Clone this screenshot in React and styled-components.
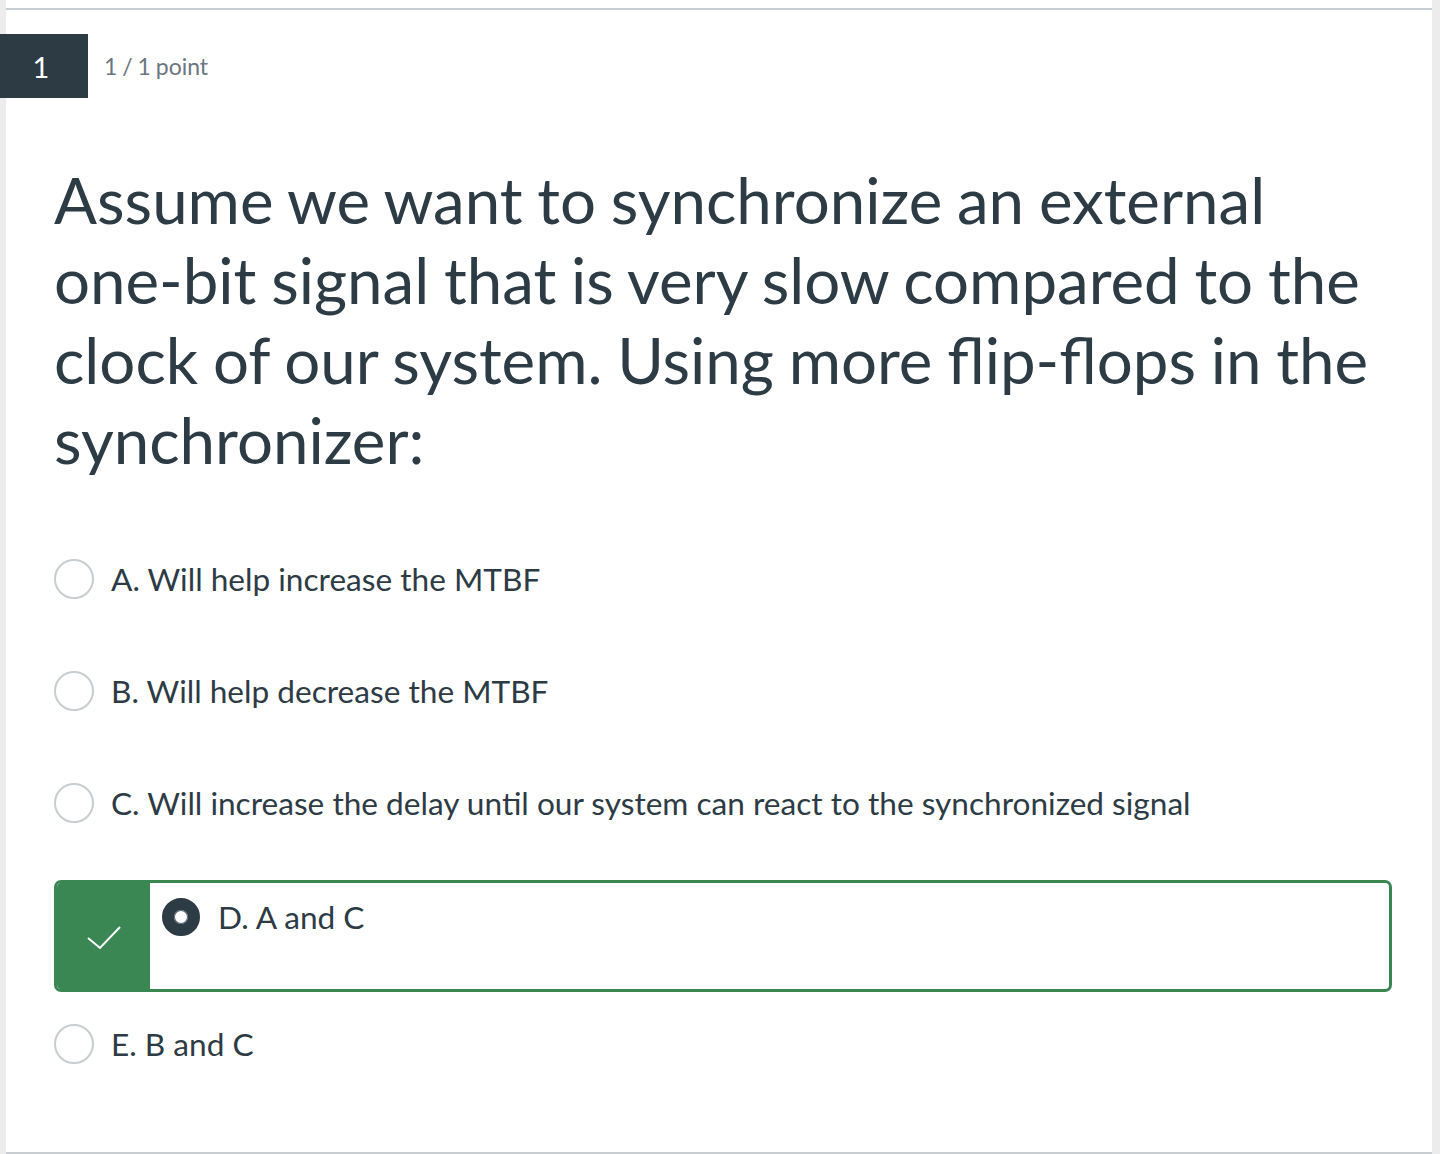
import styled, { createGlobalStyle } from "styled-components";

const Global = createGlobalStyle`
  html, body { margin: 0; padding: 0; }
  body {
    background: #ececec;
    font-family: Lato, "Noto Sans", sans-serif;
    color: #2d3b45;
  }
`

const Page = styled.div`
  margin: 0 8px 0 6px;
  height: 1154px;
  background: #fff;
  display: flex;
  flex-direction: column;
  box-sizing: border-box;
  padding-top: 8px;
`

const Question = styled.div`
  flex: 1;
  border-top: 2px solid #c7cdd1;
  border-bottom: 2px solid #c7cdd1;
  padding: 24px 40px 0 48px;
`

const Header = styled.div`
  display: flex;
  align-items: center;
  margin-left: -54px;
`

const Badge = styled.div`
  width: 88px;
  height: 64px;
  background: #2d3b45;
  color: #fff;
  font-size: 29px;
  display: flex;
  align-items: center;
  justify-content: center;
  box-sizing: border-box;
  padding-right: 6px;
`

const Points = styled.span`
  margin-left: 16px;
  font-size: 23px;
  color: #6b7780;
  word-spacing: -1px;
`

const Prompt = styled.p`
  margin: 62px 0 79px;
  font-size: 63.6px;
  line-height: 80px;
  word-spacing: -1.5px;
`

const Options = styled.div`
  display: flex;
  flex-direction: column;
`

const Option = styled.div`
  display: flex;
  align-items: center;
  height: 40px;
  margin-bottom: ${p => p.$gap}px;
  font-size: 31.6px;
`

const Radio = styled.span`
  width: 40px;
  height: 40px;
  box-sizing: border-box;
  border-radius: 50%;
  border: 2px solid #c7cdd1;
  margin-right: 17px;
  flex-shrink: 0;
`

const Picked = styled.div`
  display: flex;
  height: 112px;
  box-sizing: border-box;
  border: 3px solid #3b8753;
  border-radius: 7px;
  overflow: hidden;
  margin-bottom: 32px;
`

const Mark = styled.div`
  width: 93px;
  background: #3b8753;
  display: flex;
  align-items: center;
  justify-content: center;
  padding-top: 3px;
`

const PickedBody = styled.div`
  display: flex;
  align-items: center;
  height: 40px;
  margin: 14px 0 0 12px;
  font-size: 31.6px;
`

const Dot = styled.span`
  width: 38px;
  height: 38px;
  box-sizing: border-box;
  border-radius: 50%;
  border: 12px solid #2d3b45;
  margin-right: 18px;
  box-shadow: 0 0 0 1px #5a6670 inset;
`

const options = [
  { text: "A. Will help increase the MTBF", gap: 72 },
  { text: "B. Will help decrease the MTBF", gap: 72 },
  { text: "C. Will increase the delay until our system can react to the synchronized signal", gap: 57 },
]

export default function App() {
  return (
    <>
      <Global />
      <Page>
        <Question>
          <Header>
            <Badge>1</Badge>
            <Points>1 / 1 point</Points>
          </Header>
          <Prompt>
            Assume we want to synchronize an external one-bit signal that is very slow compared to the clock of our system. Using more flip-flops in the synchronizer:
          </Prompt>
          <Options>
            {options.map(o => (
              <Option key={o.text} $gap={o.gap}>
                <Radio />
                {o.text}
              </Option>
            ))}
            <Picked>
              <Mark>
                <svg width="34" height="24" viewBox="0 0 34 24" fill="none">
                  <path d="M1 12 L13 22 L33 1" stroke="#fff" strokeWidth="2" />
                </svg>
              </Mark>
              <PickedBody>
                <Dot />
                D. A and C
              </PickedBody>
            </Picked>
            <Option $gap={0}>
              <Radio />
              E. B and C
            </Option>
          </Options>
        </Question>
      </Page>
    </>
  );
}
